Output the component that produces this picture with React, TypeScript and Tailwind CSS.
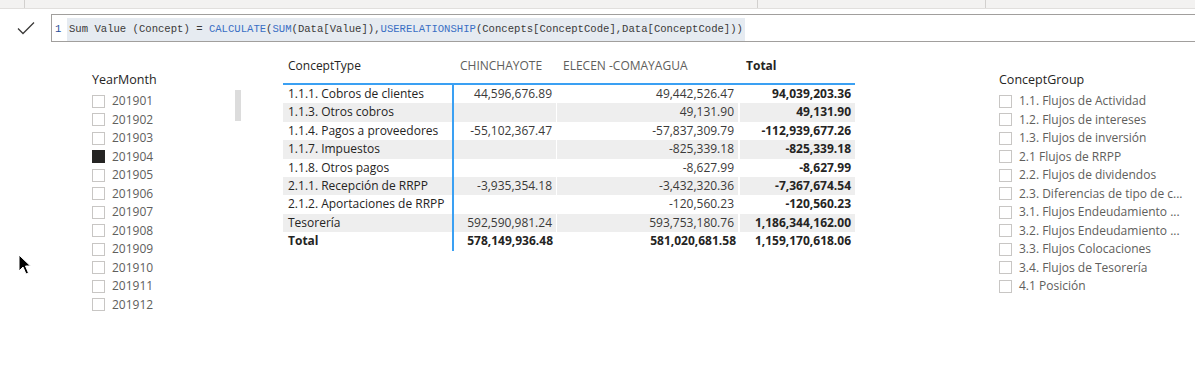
import React from 'react';

const FONT = { fontFamily: '"Segoe UI", "Open Sans", "Noto Sans", sans-serif' };
const MONO = { fontFamily: '"Liberation Mono", "DejaVu Sans Mono", monospace' };

const months = ['201901', '201902', '201903', '201904', '201905', '201906', '201907', '201908', '201909', '201910', '201911', '201912'];

const groups = [
  '1.1. Flujos de Actividad',
  '1.2. Flujos de intereses',
  '1.3. Flujos de inversión',
  '2.1 Flujos de RRPP',
  '2.2. Flujos de dividendos',
  '2.3. Diferencias de tipo de c...',
  '3.1. Flujos Endeudamiento ...',
  '3.2. Flujos Endeudamiento ...',
  '3.3. Flujos Colocaciones',
  '3.4. Flujos de Tesorería',
  '4.1 Posición',
];

const rows = [
  ['1.1.1. Cobros de clientes', '44,596,676.89', '49,442,526.47', '94,039,203.36'],
  ['1.1.3. Otros cobros', '', '49,131.90', '49,131.90'],
  ['1.1.4. Pagos a proveedores', '-55,102,367.47', '-57,837,309.79', '-112,939,677.26'],
  ['1.1.7. Impuestos', '', '-825,339.18', '-825,339.18'],
  ['1.1.8. Otros pagos', '', '-8,627.99', '-8,627.99'],
  ['2.1.1. Recepción de RRPP', '-3,935,354.18', '-3,432,320.36', '-7,367,674.54'],
  ['2.1.2. Aportaciones de RRPP', '', '-120,560.23', '-120,560.23'],
  ['Tesorería', '592,590,981.24', '593,753,180.76', '1,186,344,162.00'],
];

function Checkbox({ checked = false }: { checked?: boolean }) {
  return checked ? (
    <span className="block w-[13px] h-[13px] bg-[#252423] shrink-0" />
  ) : (
    <span className="block w-[13px] h-[13px] border border-[#c8c6c4] bg-white shrink-0" />
  );
}

function SlicerItem({ label, checked }: { label: string; checked?: boolean }) {
  return (
    <div className="flex items-center h-[18.5px]">
      <Checkbox checked={checked} />
      <span className="ml-[7px] text-[12px] text-[#605e5c] whitespace-nowrap">{label}</span>
    </div>
  );
}

export default function App() {
  return (
    <div className="w-[1195px] h-[367px] bg-white overflow-hidden relative" style={FONT}>
      {/* top ribbon edge */}
      <div className="h-[9px] bg-[#f3f2f1] border-b border-[#e1dfdd] flex">
        <div className="w-[25px] border-r border-[#d2d0ce]" />
        <div className="w-[733px] border-r border-[#d2d0ce]" />
        <div className="w-[228px] border-r border-[#d2d0ce]" />
      </div>

      {/* formula bar */}
      <div className="flex h-[33px] pt-[5px]">
        <div className="w-[51px] flex items-center justify-center">
          <svg width="20" height="14" viewBox="0 0 20 14" className="ml-[1px]">
            <path d="M2 7.5 L7 12.5 L18 1.5" fill="none" stroke="#3b3a39" strokeWidth="1.3" />
          </svg>
        </div>
        <div className="flex-1 h-[28px] border-y border-l border-[#a19f9d] flex items-center pl-[3px] pt-[3px]" style={MONO}>
          <span className="text-[10.6px] text-[#1f4e99] w-[12px]">1</span>
          <span className="text-[10.6px] bg-[#e6ebf1] px-[2px] py-[4px] text-[#3b3a39] whitespace-pre">
            Sum Value (Concept) = <span className="text-[#3a6fc4]">CALCULATE</span>(<span className="text-[#3a6fc4]">SUM</span>(Data[Value]),<span className="text-[#3a6fc4]">USERELATIONSHIP</span>(Concepts[ConceptCode],Data[ConceptCode]))
          </span>
        </div>
      </div>

      {/* canvas */}
      <div className="flex mt-[13px]">
        {/* YearMonth slicer */}
        <div className="ml-[92px] w-[150px] mt-[16px] flex">
          <div className="w-[143px]">
            <div className="text-[12.5px] text-[#252423] h-[18px] leading-[18px]">YearMonth</div>
            <div className="mt-[3px]">
              {months.map((m) => (
                <SlicerItem key={m} label={m} checked={m === '201904'} />
              ))}
            </div>
          </div>
          <div className="w-[6px] h-[31px] bg-[#dcdcdc] mt-[19px]" />
        </div>

        {/* matrix */}
        <div className="ml-[41px] w-[572px] text-[12px] text-[#252423]">
          <div className="grid grid-cols-[171px_103px_183px_115px] h-[30px] pb-[7px] items-center border-b-2 border-[#3aa0f3]">
            <div className="pl-[5px]">ConceptType</div>
            <div className="pl-[6px] text-[#605e5c]">CHINCHAYOTE</div>
            <div className="pl-[6px] text-[#605e5c]">ELECEN -COMAYAGUA</div>
            <div className="pl-[6px] font-bold">Total</div>
          </div>
          {rows.map((r, i) => (
            <div key={r[0]} className="grid grid-cols-[171px_103px_183px_115px] h-[18.4px] leading-[18.4px]">
              <div className={`pl-[5px] whitespace-nowrap ${i % 2 ? 'bg-[#eeeeee]' : ''} border-r-2 border-[#3aa0f3]`}>{r[0]}</div>
              <div className={`pr-[4px] text-right text-[#3b3a39] ${i % 2 ? 'bg-[#eeeeee]' : ''} border-r border-white`}>{r[1]}</div>
              <div className={`pr-[4px] text-right text-[#3b3a39] ${i % 2 ? 'bg-[#eeeeee]' : ''} border-r-2 border-white`}>{r[2]}</div>
              <div className={`pr-[4px] text-right font-bold ${i % 2 ? 'bg-[#eeeeee]' : ''}`}>{r[3]}</div>
            </div>
          ))}
          <div className="grid grid-cols-[171px_103px_183px_115px] h-[18.4px] leading-[18.4px] font-bold">
            <div className="pl-[5px] border-r-2 border-[#3aa0f3]">Total</div>
            <div className="pr-[4px] text-right">578,149,936.48</div>
            <div className="pr-[4px] text-right">581,020,681.58</div>
            <div className="pr-[4px] text-right">1,159,170,618.06</div>
          </div>
        </div>

        {/* ConceptGroup slicer */}
        <div className="ml-[144px] mt-[16px] w-[190px]">
          <div className="text-[12.5px] text-[#252423] h-[18px] leading-[18px]">ConceptGroup</div>
          <div className="mt-[3px]">
            {groups.map((g) => (
              <SlicerItem key={g} label={g} />
            ))}
          </div>
        </div>
      </div>

      {/* mouse pointer */}
      <svg className="absolute left-[18px] top-[254px]" width="14" height="22" viewBox="0 0 14 22">
        <path d="M1 1 L1 17 L5 13 L8 20 L10.5 19 L7.5 12 L12.5 12 Z" fill="#000" stroke="#fff" strokeWidth="1" />
      </svg>
    </div>
  );
}
